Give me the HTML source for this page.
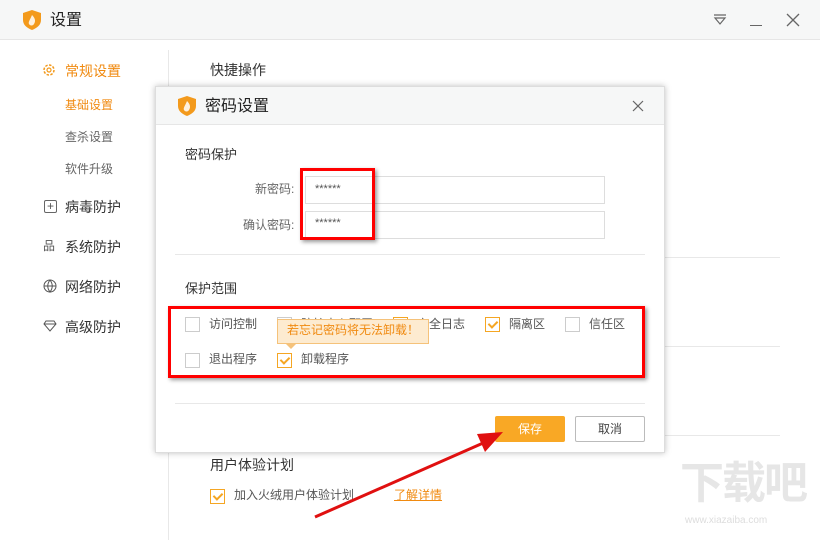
<!DOCTYPE html>
<html><head><meta charset="utf-8"><style>
*{margin:0;padding:0;box-sizing:border-box}
body{width:820px;height:540px;overflow:hidden;background:#fff;font-family:"Liberation Sans","Noto Sans CJK SC",sans-serif;color:#333;position:relative;font-size:13px}
.a{position:absolute;white-space:nowrap;line-height:1.45}
.cb{position:absolute;width:15px;height:15px;border:1px solid #ccc;background:#fff}
.cb.on{border-color:#f5a623}
.cb.on:after{content:"";position:absolute;left:4px;top:1px;width:4px;height:7px;border:solid #f5a623;border-width:0 2px 2px 0;transform:rotate(45deg)}
</style></head><body>
<div class="a" style="left:0;top:0;width:820px;height:40px;background:#f6f7f7;border-bottom:1px solid #e6e6e6"></div>
<svg class="a" style="left:22px;top:9px" width="20" height="22" viewBox="0 0 20 22"><path d="M10 1 L19 4 V11 C19 16 15 19 10 21 C5 19 1 16 1 11 V4 Z" fill="#f39a1c"/><path d="M10 6 C13 9 14 12 12 15 C11 17 8 17 7 15 C6 13 8 11 10 6Z" fill="#fff" opacity=".85"/></svg>
<div class="a" style="left:50px;top:9px;font-size:16px;color:#222">设置</div>
<svg class="a" style="left:712px;top:13px" width="16" height="14"><path d="M2 2H14M3 5L8 11L13 5Z" fill="none" stroke="#666" stroke-width="1.2"/></svg>
<div class="a" style="left:750px;top:25px;width:12px;height:1px;background:#666"></div>
<svg class="a" style="left:786px;top:13px" width="14" height="14"><path d="M1 1L13 13M13 1L1 13" stroke="#666" stroke-width="1.3"/></svg>
<div class="a" style="left:168px;top:50px;width:1px;height:490px;background:#e8e8e8"></div>
<svg class="a" style="left:42px;top:63px" width="14" height="14"><circle cx="7" cy="7" r="5" fill="none" stroke="#f39a1c" stroke-width="1.5" stroke-dasharray="2.5 1.4"/><circle cx="7" cy="7" r="2" fill="none" stroke="#f39a1c" stroke-width="1.2"/></svg>
<div class="a" style="left:65px;top:61px;font-size:14px;color:#f08a10">常规设置</div>
<div class="a" style="left:65px;top:97px;font-size:12px;color:#f08a10">基础设置</div>
<div class="a" style="left:65px;top:129px;font-size:12px;color:#666">查杀设置</div>
<div class="a" style="left:65px;top:161px;font-size:12px;color:#666">软件升级</div>
<div class="a" style="left:44px;top:200px;width:13px;height:13px;border:1px solid #666;border-radius:2px;font-size:12px;line-height:10px;text-align:center;color:#555">+</div>
<div class="a" style="left:65px;top:197px;font-size:14px">病毒防护</div>
<div class="a" style="left:43px;top:238px;font-size:12px;color:#555">品</div>
<div class="a" style="left:65px;top:237px;font-size:14px">系统防护</div>
<svg class="a" style="left:43px;top:279px" width="14" height="14"><circle cx="7" cy="7" r="6" fill="none" stroke="#555"/><path d="M1 7H13M7 1C4 5 4 9 7 13C10 9 10 5 7 1" fill="none" stroke="#555"/></svg>
<div class="a" style="left:65px;top:277px;font-size:14px">网络防护</div>
<svg class="a" style="left:43px;top:320px" width="14" height="12"><path d="M3 1H11L13 4L7 11L1 4Z M1 4H13" fill="none" stroke="#555"/></svg>
<div class="a" style="left:65px;top:317px;font-size:14px">高级防护</div>
<div class="a" style="left:210px;top:60px;font-size:14px">快捷操作</div>
<div class="a" style="left:170px;top:257px;width:610px;height:1px;background:#e8e8e8"></div>
<div class="a" style="left:170px;top:346px;width:610px;height:1px;background:#e8e8e8"></div>
<div class="a" style="left:170px;top:435px;width:610px;height:1px;background:#e8e8e8"></div>
<div class="a" style="left:210px;top:455px;font-size:14px">用户体验计划</div>
<div class="cb on" style="left:210px;top:489px"></div>
<div class="a" style="left:234px;top:487px;font-size:12px;color:#555">加入火绒用户体验计划</div>
<div class="a" style="left:394px;top:487px;font-size:12px;color:#f08a10;text-decoration:underline">了解详情</div>
<div class="a" style="left:155px;top:86px;width:510px;height:367px;background:#fff;border:1px solid #ddd;box-shadow:0 0 6px rgba(0,0,0,.25)"></div>
<div class="a" style="left:156px;top:87px;width:508px;height:38px;background:#f6f7f7;border-bottom:1px solid #e6e6e6"></div>
<svg class="a" style="left:177px;top:95px" width="20" height="22" viewBox="0 0 20 22"><path d="M10 1 L19 4 V11 C19 16 15 19 10 21 C5 19 1 16 1 11 V4 Z" fill="#f39a1c"/><path d="M10 6 C13 9 14 12 12 15 C11 17 8 17 7 15 C6 13 8 11 10 6Z" fill="#fff" opacity=".85"/></svg>
<div class="a" style="left:205px;top:95px;font-size:16px;color:#222">密码设置</div>
<svg class="a" style="left:632px;top:100px" width="12" height="12"><path d="M1 1L11 11M11 1L1 11" stroke="#666" stroke-width="1.2"/></svg>
<div class="a" style="left:185px;top:146px;font-size:13px">密码保护</div>
<div class="a" style="left:255px;top:181px;font-size:12px;color:#666">新密码:</div>
<div class="a" style="left:305px;top:176px;width:300px;height:28px;border:1px solid #ddd"></div>
<div class="a" style="left:315px;top:182px;font-size:11px;color:#555">******</div>
<div class="a" style="left:243px;top:217px;font-size:12px;color:#666">确认密码:</div>
<div class="a" style="left:305px;top:211px;width:300px;height:28px;border:1px solid #ddd"></div>
<div class="a" style="left:315px;top:216px;font-size:11px;color:#555">******</div>
<div class="a" style="left:300px;top:168px;width:75px;height:72px;border:3px solid #f00;box-shadow:2px 2px 4px rgba(0,0,0,.4)"></div>
<div class="a" style="left:175px;top:254px;width:470px;height:1px;background:#e8e8e8"></div>
<div class="a" style="left:185px;top:280px;font-size:13px">保护范围</div>
<div class="cb" style="left:185px;top:317px"></div><div class="a" style="left:209px;top:316px;font-size:12px;color:#555">访问控制</div>
<div class="cb" style="left:277px;top:317px"></div><div class="a" style="left:301px;top:316px;font-size:12px;color:#555">防护中心配置</div>
<div class="cb on" style="left:393px;top:317px"></div><div class="a" style="left:417px;top:316px;font-size:12px;color:#555">安全日志</div>
<div class="cb on" style="left:485px;top:317px"></div><div class="a" style="left:509px;top:316px;font-size:12px;color:#555">隔离区</div>
<div class="cb" style="left:565px;top:317px"></div><div class="a" style="left:589px;top:316px;font-size:12px;color:#555">信任区</div>
<div class="cb" style="left:185px;top:353px"></div><div class="a" style="left:209px;top:351px;font-size:12px;color:#555">退出程序</div>
<div class="cb on" style="left:277px;top:353px"></div><div class="a" style="left:301px;top:351px;font-size:12px;color:#555">卸载程序</div>
<div class="a" style="left:277px;top:319px;width:152px;height:25px;background:#fdebd0;border:1px solid #f5c27a;font-size:12px;color:#f08a10;padding:3px 0 0 9px;line-height:1.2">若忘记密码将无法卸载！</div>
<div class="a" style="left:286px;top:344px;width:0;height:0;border:5px solid transparent;border-top-color:#f5c27a"></div>
<div class="a" style="left:168px;top:306px;width:477px;height:72px;border:3px solid #f00;box-shadow:2px 2px 4px rgba(0,0,0,.4)"></div>
<div class="a" style="left:175px;top:403px;width:470px;height:1px;background:#e8e8e8"></div>
<div class="a" style="left:495px;top:416px;width:70px;height:26px;background:#f9a825;color:#fff;font-size:12px;text-align:center;line-height:26px;border-radius:2px">保存</div>
<div class="a" style="left:575px;top:416px;width:70px;height:26px;border:1px solid #bbb;color:#444;font-size:12px;text-align:center;line-height:24px;border-radius:2px">取消</div>
<svg class="a" style="left:0;top:0" width="820" height="540"><path d="M315 517L490 440" stroke="#e01010" stroke-width="3"/><path d="M503 432L477 434L485 452Z" fill="#e01010"/></svg>
<div class="a" style="left:680px;top:458px;font-size:44px;color:#e6e6e6;font-weight:bold;letter-spacing:-2px;line-height:1.2">下载吧</div>
<div class="a" style="left:685px;top:515px;font-size:10px;color:#ddd;line-height:1.2">www.xiazaiba.com</div>
</body></html>
